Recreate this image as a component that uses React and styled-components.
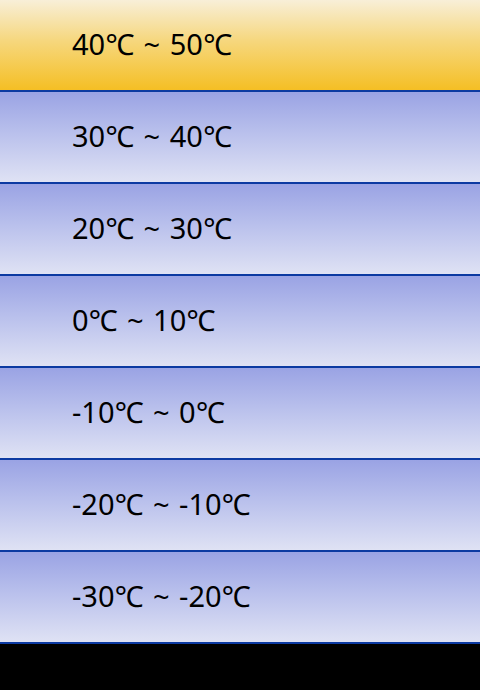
import styled, { createGlobalStyle } from "styled-components";

const Global = createGlobalStyle`
  html, body {
    margin: 0;
    padding: 0;
    background: #000;
  }
  body {
    width: 480px;
    height: 690px;
    overflow: hidden;
  }
`;

const List = styled.div`
  display: flex;
  flex-direction: column;
  width: 480px;
  height: 690px;
  background: #000;
`;

const Row = styled.div`
  display: flex;
  align-items: center;
  box-sizing: border-box;
  height: 92px;
  padding: 0 0 4px 72px;
  border-bottom: 2px solid #0c3aa2;
  background: ${(props) =>
    props.selected
      ? "linear-gradient(to bottom, #f8efd8 0%, #f6d77e 45%, #f5bf24 100%)"
      : "linear-gradient(to bottom, #9aa3e4 0%, #b9c0ec 45%, #dfe2f4 100%)"};
`;

const Label = styled.span`
  font-family: "Noto Sans", "Open Sans", "DejaVu Sans", sans-serif;
  font-size: 29px;
  line-height: 1;
  color: #000;
  white-space: pre;
  word-spacing: 2px;
`;

const ranges = [
  "40℃ ~ 50℃",
  "30℃ ~ 40℃",
  "20℃ ~ 30℃",
  "0℃ ~ 10℃",
  "-10℃ ~ 0℃",
  "-20℃ ~ -10℃",
  "-30℃ ~ -20℃",
];

const App = () => {
  return (
    <>
      <Global />
      <List>
        {ranges.map((r, i) => (
          <Row key={r} selected={i === 0}>
            <Label>{r}</Label>
          </Row>
        ))}
      </List>
    </>
  );
};

export default App;
